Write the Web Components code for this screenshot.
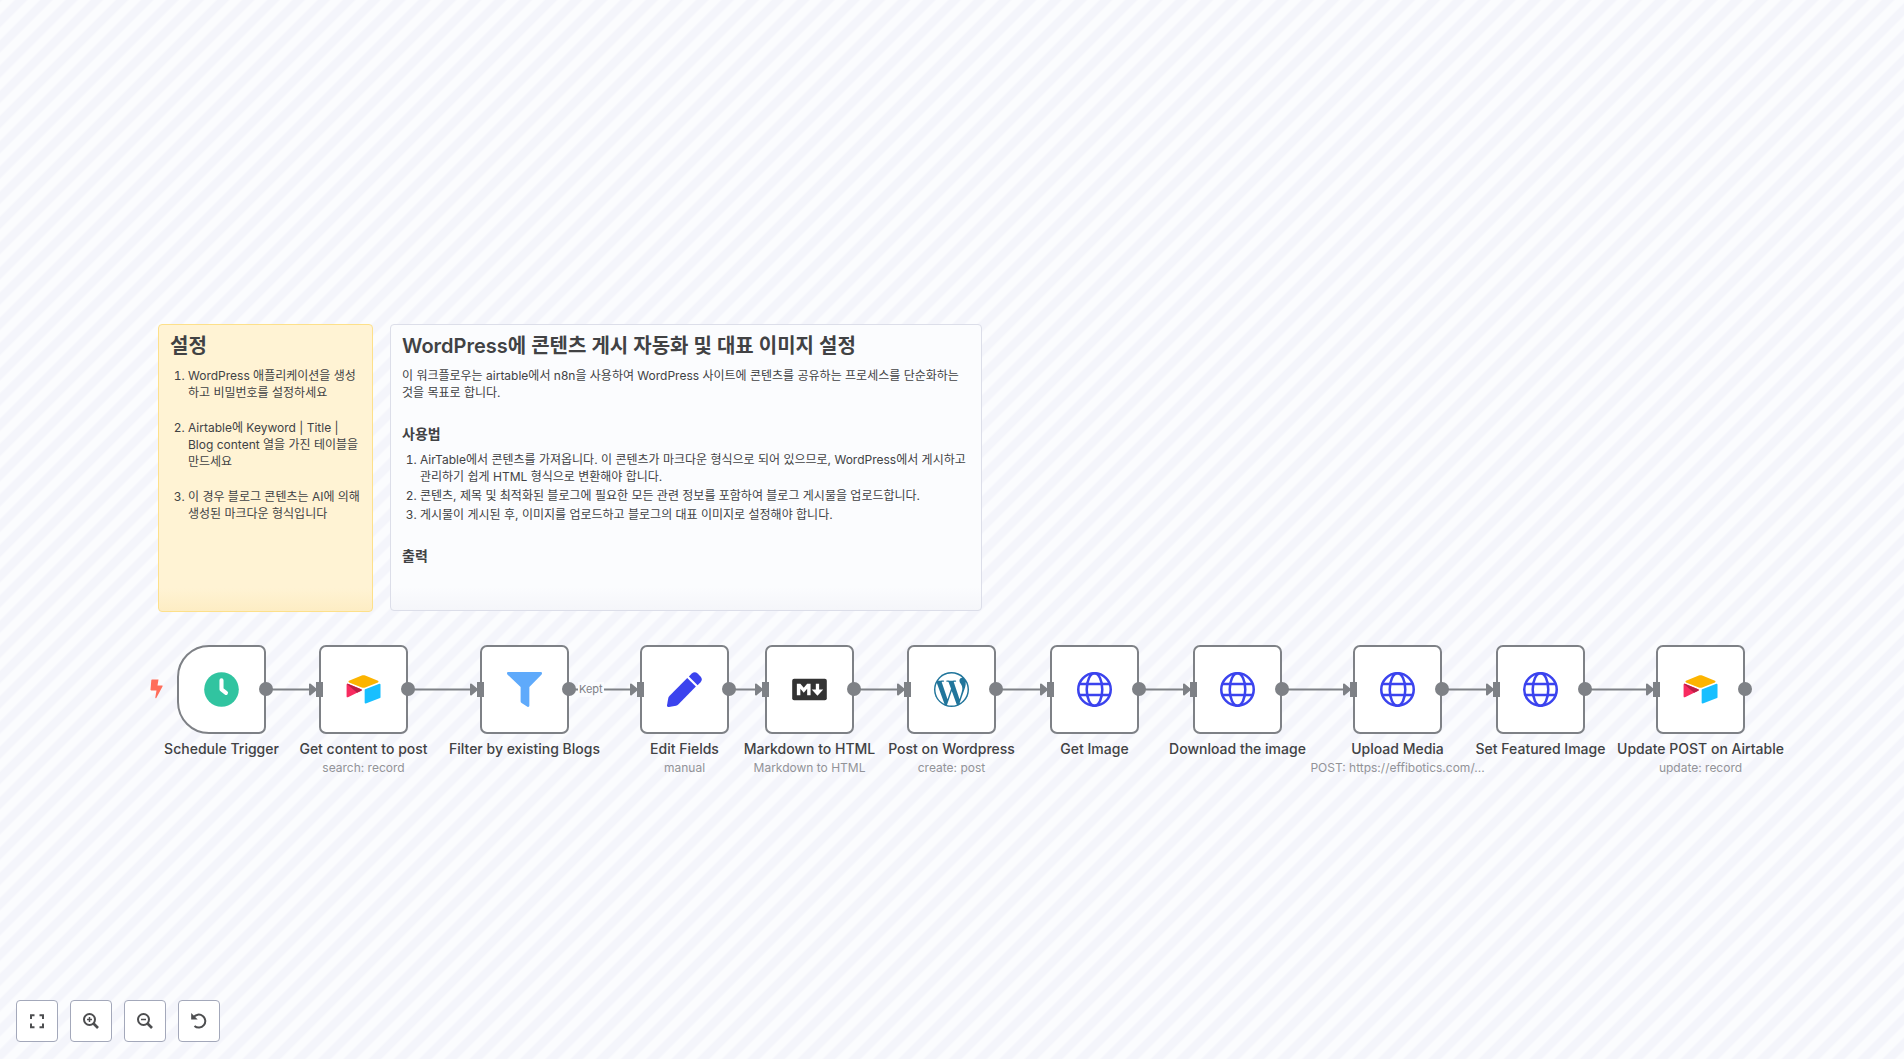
<!DOCTYPE html>
<html lang="ko">
<head>
<meta charset="utf-8">
<title>Workflow</title>
<style>
html, body { margin: 0; height: 100%; }
body { font-family: Inter, "Noto Sans CJK KR", sans-serif; color: #414244; overflow: hidden; }
</style>
</head>
<body>
<flow-canvas>
  <flow-note style="--x:158px;--y:324px;--w:215px;--h:288px" tone="yellow">
    <h2>설정</h2>
    <ol class="loose">
      <li>WordPress 애플리케이션을 생성<br>하고 비밀번호를 설정하세요</li>
      <li>Airtable에 Keyword | Title |<br>Blog content 열을 가진 테이블을<br>만드세요</li>
      <li>이 경우 블로그 콘텐츠는 AI에 의해<br>생성된 마크다운 형식입니다</li>
    </ol>
  </flow-note>
  <flow-note style="--x:390px;--y:324px;--w:592px;--h:287px">
    <h2>WordPress에 콘텐츠 게시 자동화 및 대표 이미지 설정</h2>
    <p>이 워크플로우는 airtable에서 n8n을 사용하여 WordPress 사이트에 콘텐츠를 공유하는 프로세스를 단순화하는<br>것을 목표로 합니다.</p>
    <h3>사용법</h3>
    <ol>
      <li>AirTable에서 콘텐츠를 가져옵니다. 이 콘텐츠가 마크다운 형식으로 되어 있으므로, WordPress에서 게시하고<br>관리하기 쉽게 HTML 형식으로 변환해야 합니다.</li>
      <li>콘텐츠, 제목 및 최적화된 블로그에 필요한 모든 관련 정보를 포함하여 블로그 게시물을 업로드합니다.</li>
      <li>게시물이 게시된 후, 이미지를 업로드하고 블로그의 대표 이미지로 설정해야 합니다.</li>
    </ol>
    <h3>출력</h3>
  </flow-note>
  <flow-node x="177" icon="clock" trigger name="Schedule Trigger"></flow-node>
  <flow-node x="319" icon="airtable" name="Get content to post" sub="search: record"></flow-node>
  <flow-node x="480" icon="filter" name="Filter by existing Blogs"></flow-node>
  <flow-node x="640" icon="pen" name="Edit Fields" sub="manual"></flow-node>
  <flow-node x="765" icon="markdown" name="Markdown to HTML" sub="Markdown to HTML"></flow-node>
  <flow-node x="907" icon="wordpress" name="Post on Wordpress" sub="create: post"></flow-node>
  <flow-node x="1050" icon="globe" name="Get Image"></flow-node>
  <flow-node x="1193" icon="globe" name="Download the image"></flow-node>
  <flow-node x="1353" icon="globe" name="Upload Media" sub="POST: https://effibotics.com/..."></flow-node>
  <flow-node x="1496" icon="globe" name="Set Featured Image"></flow-node>
  <flow-node x="1656" icon="airtable" name="Update POST on Airtable" sub="update: record"></flow-node>
  <canvas-controls slot="controls"></canvas-controls>
</flow-canvas>
<script>
const ICONS = {
  clock: '<circle cx="18" cy="18" r="17.8" fill="#31c4a0"/><path d="M18 8.500v9.300l4.600 3.700" fill="none" stroke="#fff" stroke-width="4.200" stroke-linecap="round" stroke-linejoin="round"/>',
  airtable: '<path d="M16.2 3.7 3.1 9.1c-.7.3-.7 1.3 0 1.6l13.1 5.2c1.2.5 2.4.5 3.6 0l13.1-5.2c.7-.3.7-1.3 0-1.6L19.8 3.7c-1.2-.5-2.4-.5-3.6 0z" fill="#fcb400"/><path d="M19.2 18.6v13c0 .6.6 1 1.2.8l14.600-5.700c.3-.1.5-.4.5-.8V12.900c0-.6-.6-1-1.200-.8l-14.600 5.700c-.3.1-.5.4-.5.8z" fill="#18bfff"/><path d="m15.700 19.300-4.300 2.100L2 25.900c-.6.3-1.400-.1-1.400-.8V13c0-.7.7-1.100 1.300-.8l13.700 5.500c.8.3.8 1.300.1 1.600z" fill="#f82b60"/><path d="m15.700 19.300-4.300 2.100L.9 12.400c.3-.3.6-.3 1-.2l13.700 5.500c.8.3.8 1.300.1 1.600z" fill="#ba1e45"/>',
  filter: '<path d="M1.200 0h33.600c1.200 0 1.600 1.600.8 2.500L23 15.500V34.500c0 1.200-1 1.700-2 1.200l-6-3.700c-.7-.5-1-1-1-1.800V15.500L.4 2.500C-.4 1.600 0 0 1.200 0z" fill="#5faafb"/>',
  pen: '<path d="M20.800 6.200 29.700 15 11.600 33.300a5 5 0 0 1-2.300 1.300L2 36c-1.200.2-2.200-.6-2-1.800l1.400-7.600a5 5 0 0 1 1.300-2.300z" fill="#3b43ee"/><path d="m22.500 4.500 3-3a4.500 4.500 0 0 1 6 0l3 3a4.500 4.500 0 0 1 0 6l-3 3z" fill="#3b43ee"/>',
  markdown: '<rect x=".2" y="7" width="35.600" height="22" rx="2" fill="#333"/><path d="M5 24V12h3.600l3.500 4.200 3.500-4.200h3.500v12h-3.500v-6.800l-3.500 4.200-3.500-4.200V24zM24.500 12h3.400v6h4.200l-5.900 6.300-5.900-6.300h4.200z" fill="#fff"/>',
  wordpress: '<circle cx="18" cy="18" r="18" fill="#21759b"/><g transform="translate(18 18) scale(.0776) translate(-256 -256)"><path fill="#fff" d="M61.700 169.400l101.500 278C92.200 413 43.300 340.200 43.300 256c0-30.900 6.600-60.100 18.400-86.600zm337.900 75.900c0-26.300-9.400-44.500-17.500-58.700-10.800-17.500-20.900-32.400-20.900-49.900 0-19.600 14.800-37.800 35.700-37.800.9 0 1.800.1 2.800.2-37.900-34.700-88.300-55.900-143.700-55.900-74.300 0-139.700 38.100-177.800 95.900 5 .2 9.700.3 13.700.3 22.200 0 56.700-2.700 56.700-2.700 11.500-.7 12.800 16.200 1.400 17.500 0 0-11.500 1.300-24.300 2l77.500 230.400L249.800 247l-33.100-90.800c-11.500-.7-22.300-2-22.300-2-11.500-.7-10.100-18.200 1.300-17.500 0 0 35.100 2.700 56 2.700 22.200 0 56.700-2.700 56.700-2.700 11.500-.7 12.800 16.200 1.400 17.500 0 0-11.500 1.300-24.300 2l76.900 228.700 21.200-70.900c9-29.400 16-50.500 16-68.700zm-139.900 29.300l-63.800 185.500c19.100 5.600 39.200 8.700 60.100 8.700 24.800 0 48.500-4.300 70.600-12.100-.6-.9-1.100-1.900-1.500-2.900l-65.400-179.200zm183-120.700c.9 6.800 1.400 14 1.400 21.900 0 21.600-4 45.800-16.200 76.200l-65 187.900C426.200 403 468.700 334.500 468.700 256c0-37-9.400-71.800-26-102.100z"/></g>',
  globe: '<g fill="none" stroke="#3b43ee" stroke-width="2.600"><circle cx="18" cy="18" r="16.700"/><ellipse cx="18" cy="18" rx="8" ry="16.700"/><path d="M2 12.300h32M2 23.700h32"/></g>'
};

class FlowCanvas extends HTMLElement {
  connectedCallback() {
    const root = this.attachShadow({ mode: 'open' });
    root.innerHTML = `
      <style>
        :host { display: grid; min-height: 100vh; position: relative; overflow: hidden; background: #fbfcfe; isolation: isolate; }
        svg { position: absolute; inset: 0; width: 100%; height: 100%; z-index: -1; }
        .label { position: absolute; left: 578px; top: 682px; padding: 0 1px; font-size: 11px; line-height: 15px; color: #7e8186; background: #fafbfe; }
        slot[name=controls] { display: block; align-self: end; justify-self: start; }
      </style>
      <svg aria-hidden="true">
        <defs><pattern id="stripes" patternUnits="userSpaceOnUse" y="-6" width="17.84" height="17.84" patternTransform="rotate(135)">
          <path d="M0 8.920H17.840" stroke="#f4f5fb" stroke-width="8.920"/></pattern></defs>
        <rect width="100%" height="100%" fill="url(#stripes)"/>
        <g id="edges" stroke="#7e8186" stroke-width="2" fill="#7e8186" stroke-linejoin="round"></g>
      </svg>
      <slot></slot>
      <span class="label">Kept</span>
      <slot name="controls"></slot>`;
    const xs = [...this.querySelectorAll('flow-node')].map(n => +n.getAttribute('x'));
    root.getElementById('edges').innerHTML = xs.slice(1).map((x, i) =>
      `<path d="M${xs[i] + 89} 689.500H${x - 8}"/><path d="M${x - 9} 684.500v10l6-5z"/>`).join('');
  }
}

class FlowNote extends HTMLElement {
  connectedCallback() {
    const root = this.attachShadow({ mode: 'open' });
    root.innerHTML = `
      <style>
        :host { position: absolute; left: var(--x); top: var(--y); width: var(--w); height: var(--h); box-sizing: border-box;
          border: 1px solid #dcdee9; border-radius: 4px; padding: 8px 11px; font-size: 12px; line-height: 17px; white-space: nowrap;
          background: linear-gradient(#fbfcfe 92%, #f5f6fa); }
        :host([tone=yellow]) { border-color: #fde08a; background: linear-gradient(#fff3d4 92%, #fdedc4); }
        ::slotted(*) { margin: 0; }
        h2 { margin: 0 0 8px; font-size: 20px; line-height: 26px; font-weight: 600; }
        h3 { margin: 24px 0 9px; font-size: 14px; line-height: 17px; font-weight: 600; }
        p, ol { margin: 0; }
        ol { padding-left: 18px; }
        li + li { margin-top: 2px; }
        .loose li + li { margin-top: 18px; }
      </style>`;
    root.append(...this.childNodes);
  }
}

class FlowNode extends HTMLElement {
  connectedCallback() {
    const a = n => this.getAttribute(n) || '';
    const trigger = this.hasAttribute('trigger');
    const root = this.attachShadow({ mode: 'open' });
    this.style.left = a('x') + 'px';
    root.innerHTML = `
      <style>
        :host { position: absolute; top: 645px; width: 89px; display: flex; flex-direction: column; align-items: center; white-space: nowrap; }
        .box { position: relative; box-sizing: border-box; width: 89px; height: 89px; border: 2px solid #7e8186; border-radius: 7px; background: #fff; display: grid; place-items: center; }
        :host([trigger]) .box { border-radius: 32px 7px 7px 32px; }
        .icon { width: 35px; height: 35px; overflow: visible; }
        .in { position: absolute; left: -5px; top: 35px; width: 7px; height: 15px; background: #7e8186; }
        .out { position: absolute; right: -9px; top: 35px; width: 14px; height: 14px; border-radius: 50%; background: #7e8186; }
        .bolt { position: absolute; left: -29px; top: 32px; width: 13px; height: 20px; }
        .name { margin-top: 6px; font-size: 14px; line-height: 18px; font-weight: 500; }
        .sub { margin-top: 2px; font-size: 12px; line-height: 15px; color: #929398; }
      </style>
      <div class="box"><svg class="icon" viewBox="0 0 36 36" aria-hidden="true">${ICONS[a('icon')]}</svg>
        ${trigger ? '<svg class="bolt" viewBox="0 0 13 20" aria-hidden="true"><path d="M2 .5h6.500L7.500 6.500H12c.6 0 .8.5.5 1L6.300 18.900c-.4.6-1.200.2-1-.5L6.500 11.500H1.300c-.6 0-.9-.4-.8-.9L1.300 1.200C1.300.8 1.600.5 2 .5z" fill="#ff6d5a"/></svg>' : '<i class="in"></i>'}
        <i class="out"></i></div>
      <div class="name">${a('name')}</div>
      ${a('sub') ? `<div class="sub">${a('sub')}</div>` : ''}`;
  }
}

class CanvasControls extends HTMLElement {
  connectedCallback() {
    const lens = '<circle cx="6.500" cy="6.500" r="5.500"/><path d="m10.500 10.500 4.500 4.500" stroke-width="2.600"/><path d="M4 6.500h5" stroke-width="1.500"/>';
    const items = [
      ['Zoom to fit', '<path d="M2 6V2.200h3.500M10.500 2.200H14V6M14 10.500v3.700h-3.500M5.500 14.200H2v-3.700"/>'],
      ['Zoom in', lens + '<path d="M6.500 4v5" stroke-width="1.500"/>'],
      ['Zoom out', lens],
      ['Reset zoom', '<path d="M.2 0V6.500h6.500z" fill="#4d4e50" stroke="none"/><path d="M2.500 4.300A6.500 6.500 0 1 1 3.500 13"/>']
    ];
    this.attachShadow({ mode: 'open' }).innerHTML = `
      <style>
        :host { display: flex; gap: 12px; padding: 0 0 17px 16px; }
        button { box-sizing: border-box; width: 42px; height: 42px; padding: 0; display: grid; place-items: center; background: #fff; border: 1px solid #a3a8ba; border-radius: 4px; }
        svg { width: 16px; height: 16px; overflow: visible; fill: none; stroke: #4d4e50; stroke-width: 2; }
      </style>` + items.map(([t, d]) => `<button type="button" aria-label="${t}"><svg viewBox="0 0 16 16" aria-hidden="true">${d}</svg></button>`).join('');
  }
}

customElements.define('flow-note', FlowNote);
customElements.define('flow-node', FlowNode);
customElements.define('canvas-controls', CanvasControls);
customElements.define('flow-canvas', FlowCanvas);
</script>
</body>
</html>
